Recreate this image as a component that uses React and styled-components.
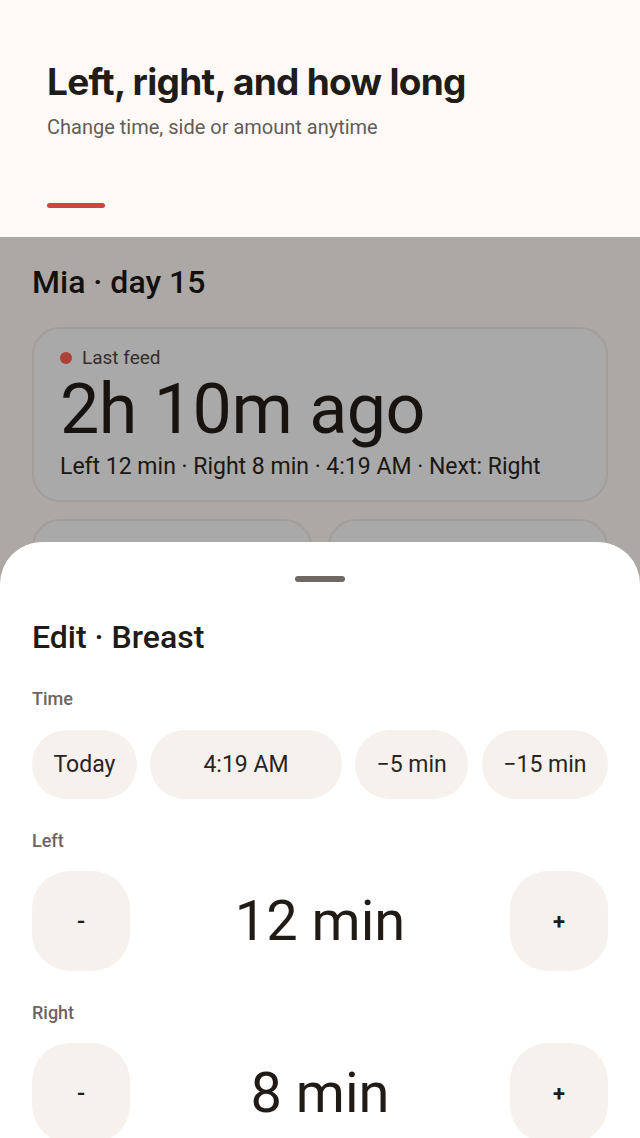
import React from 'react';
import styled, { createGlobalStyle } from 'styled-components';

const Global = createGlobalStyle`
  html, body { margin: 0; padding: 0; }
  body {
    width: 640px;
    height: 1138px;
    overflow: hidden;
    background: #fffaf7;
    font-family: Roboto, "Liberation Sans", sans-serif;
    color: #211b18;
  }
`;

const Header = styled.header`
  height: 237px;
  box-sizing: border-box;
  padding: 62px 47px 0;
  background: #fffaf7;
  display: flex;
  flex-direction: column;
`;

const Title = styled.h1`
  margin: 0;
  font-family: Inter, "Liberation Sans", sans-serif;
  font-size: 37px;
  line-height: 40px;
  font-weight: 700;
  letter-spacing: -0.7px;
  color: #211c19;
`;

const Subtitle = styled.p`
  margin: 12px 0 0;
  font-family: Roboto, "Liberation Sans", sans-serif;
  font-size: 20px;
  line-height: 26px;
  font-weight: 400;
  color: #625c58;
`;

const Accent = styled.div`
  margin-top: 63px;
  width: 58px;
  height: 5px;
  border-radius: 3px;
  background: #cc473d;
`;

const Stage = styled.section`
  position: relative;
  height: 901px;
  overflow: hidden;
  background: #fdf8f4;
`;

const Screen = styled.div`
  padding: 27px 32px 0;
  display: flex;
  flex-direction: column;
`;

const BabyName = styled.h2`
  margin: 0 0 27px;
  font-size: 32px;
  line-height: 36px;
  font-weight: 500;
  color: #1d1815;
`;

const Card = styled.div`
  box-sizing: border-box;
  background: #fafafa;
  border: 2px solid #ece7e3;
  border-radius: 28px;
  padding: 19px 26px 19px;
  height: ${p => p.$h || 'auto'};
`;

const CardLabel = styled.div`
  display: flex;
  align-items: center;
  gap: 10px;
  font-size: 19px;
  line-height: 20px;
  font-weight: 400;
  color: #4c4541;
`;

const Dot = styled.span`
  width: 12px;
  height: 12px;
  border-radius: 50%;
  background: #ff6052;
`;

const BigTime = styled.div`
  font-size: 70px;
  line-height: 72px;
  font-weight: 400;
  letter-spacing: -0.5px;
  margin-top: 5px;
  color: #231d1a;
`;

const Detail = styled.div`
  margin-top: 8px;
  font-size: 23px;
  line-height: 28px;
  color: #2a2420;
`;

const CardRow = styled.div`
  margin-top: 17px;
  display: grid;
  grid-template-columns: 1fr 1fr;
  gap: 16px;
`;

const Scrim = styled.div`
  position: absolute;
  inset: 0;
  background: rgba(0, 0, 0, 0.32);
`;

const Sheet = styled.div`
  position: absolute;
  left: 0;
  right: 0;
  top: 305px;
  bottom: 0;
  background: #ffffff;
  border-radius: 42px 42px 0 0;
  padding: 34px 32px 0;
  display: flex;
  flex-direction: column;
  & > * { flex-shrink: 0; }
`;

const Handle = styled.div`
  align-self: center;
  width: 50px;
  height: 6px;
  border-radius: 3px;
  background: #6d6966;
`;

const SheetTitle = styled.h3`
  margin: 35px 0 0;
  font-size: 32px;
  line-height: 40px;
  font-weight: 500;
  color: #211b18;
`;

const FieldLabel = styled.div`
  margin-top: 32px;
  font-size: 18px;
  line-height: 20px;
  font-weight: 500;
  color: #6b6561;
`;

const Chips = styled.div`
  margin-top: 21px;
  display: flex;
  gap: 13.5px;
`;

const Chip = styled.button`
  flex: ${p => (p.$grow ? 1 : 'none')};
  height: 69px;
  padding: 0 21.5px;
  border: none;
  border-radius: 35px;
  background: #f6f1ed;
  font-family: inherit;
  font-size: 23px;
  color: #2a2420;
`;

const Stepper = styled.div`
  margin-top: 20px;
  display: flex;
  align-items: center;
  justify-content: space-between;
`;

const StepButton = styled.button`
  width: 98px;
  height: 100px;
  border: none;
  border-radius: 38px;
  background: #f6f1ed;
  font-family: inherit;
  font-size: ${p => (p.$bold ? '22px' : '24px')};
  font-weight: ${p => (p.$bold ? 700 : 500)};
  color: #211b18;
`;

const Value = styled.div`
  font-size: 56px;
  line-height: 64px;
  color: #211b18;
`;

const sides = [
  { label: 'Left', value: '12 min' },
  { label: 'Right', value: '8 min' },
];

export default function App() {
  return (
    <>
      <Global />
      <Header>
        <Title>Left, right, and how long</Title>
        <Subtitle>Change time, side or amount anytime</Subtitle>
        <Accent />
      </Header>
      <Stage>
        <Screen>
          <BabyName>Mia · day 15</BabyName>
          <Card>
            <CardLabel><Dot />Last feed</CardLabel>
            <BigTime>2h 10m ago</BigTime>
            <Detail>Left 12 min · Right 8 min · 4:19 AM · Next: Right</Detail>
          </Card>
          <CardRow>
            <Card $h="120px" />
            <Card $h="120px" />
          </CardRow>
        </Screen>
        <Scrim />
        <Sheet>
          <Handle />
          <SheetTitle>Edit · Breast</SheetTitle>
          <FieldLabel>Time</FieldLabel>
          <Chips>
            <Chip>Today</Chip>
            <Chip $grow>4:19 AM</Chip>
            <Chip>−5 min</Chip>
            <Chip>−15 min</Chip>
          </Chips>
          {sides.map(s => (
            <React.Fragment key={s.label}>
              <FieldLabel>{s.label}</FieldLabel>
              <Stepper>
                <StepButton>-</StepButton>
                <Value>{s.value}</Value>
                <StepButton $bold>+</StepButton>
              </Stepper>
            </React.Fragment>
          ))}
        </Sheet>
      </Stage>
    </>
  );
}
